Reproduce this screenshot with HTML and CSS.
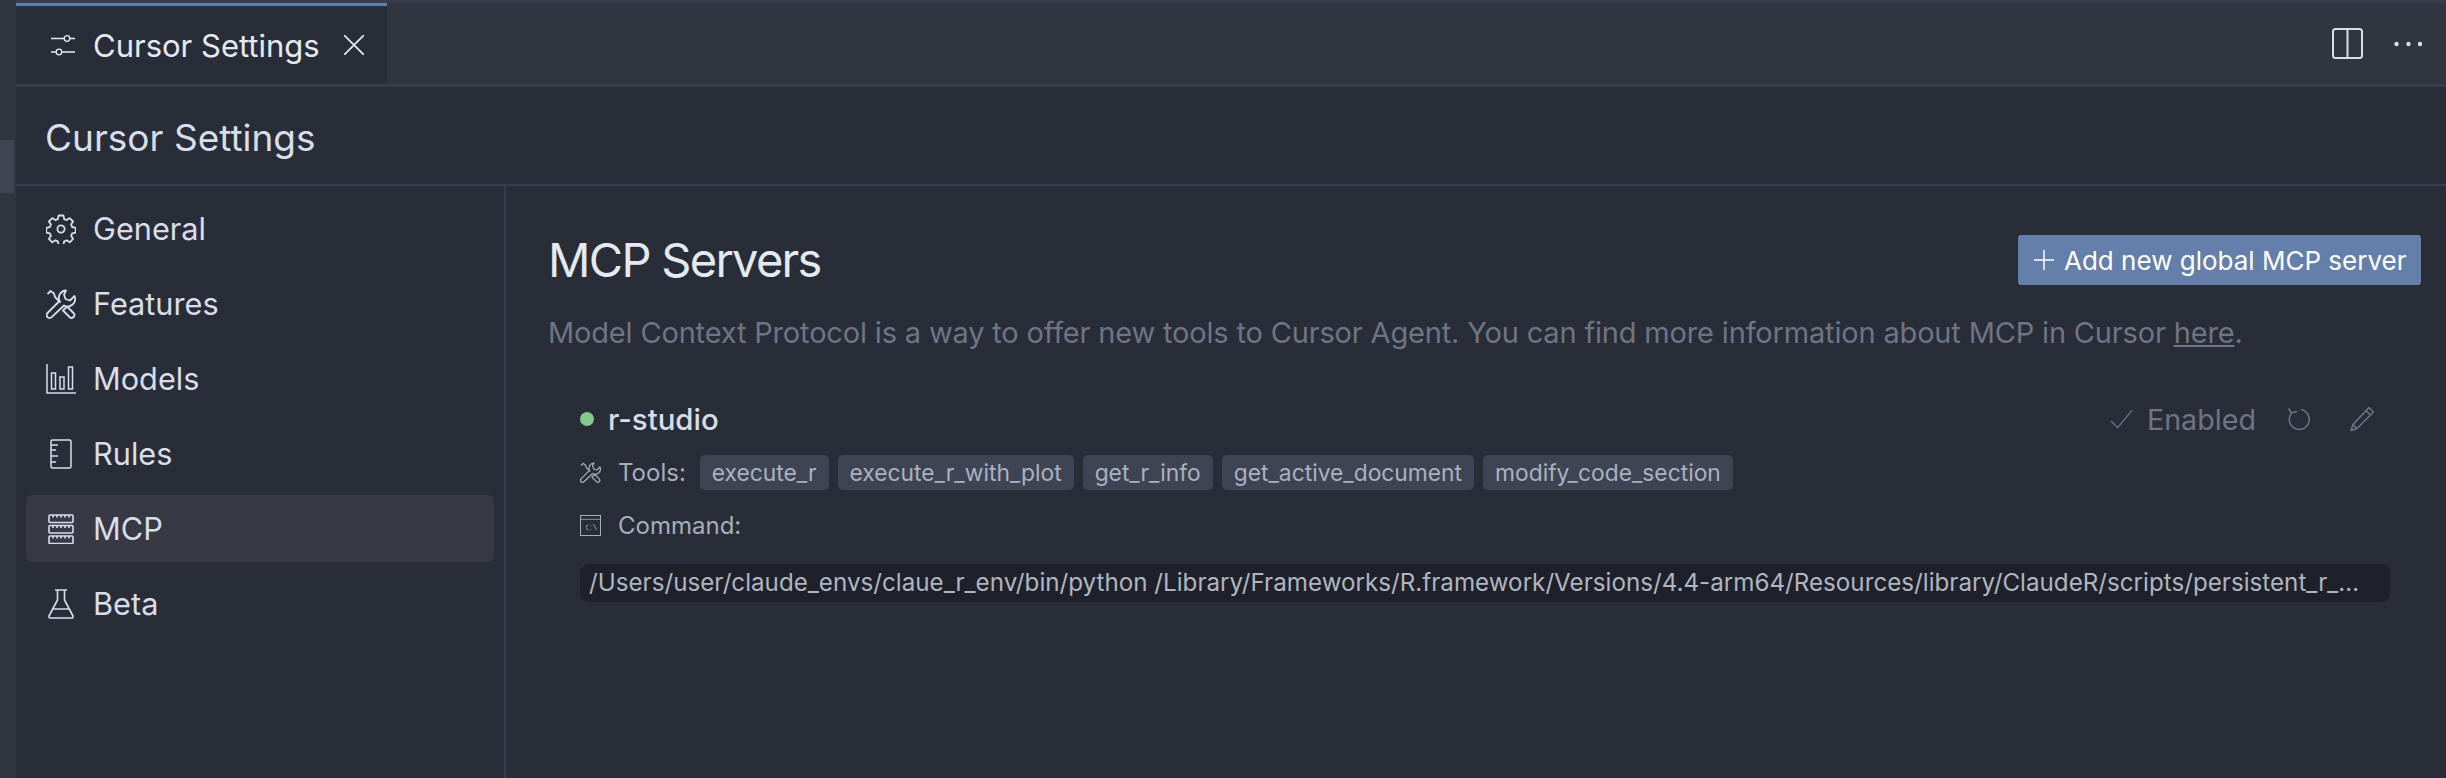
FILE: index.html
```html
<!DOCTYPE html>
<html lang="en">
<head>
<meta charset="utf-8">
<title>Cursor Settings</title>
<link rel="stylesheet" href="styles.css">
</head>
<body>
<div class="app">
  <div class="strip"><div class="strip-thumb"></div></div>
  <div class="main">
    <div class="tabbar">
      <div class="tab">
        <svg class="tab-icon" viewBox="0 0 24 22" fill="none" stroke="currentColor" stroke-width="1.300"><path d="M0 4.500h13M19 4.500h5M0 18h5M11 18h13"/><circle cx="16" cy="4.500" r="2.800"/><circle cx="8" cy="18" r="2.800"/></svg>
        <span class="tab-label">Cursor Settings</span>
        <svg class="tab-close" viewBox="0 0 20 20" fill="none" stroke="currentColor" stroke-width="1.700"><path d="M0 0l20 20M20 0L0 20"/></svg>
      </div>
      <div class="tab-actions">
        <svg class="split-icon" viewBox="0 0 31 31" fill="none" stroke="currentColor" stroke-width="2"><rect x="1" y="1" width="29" height="29" rx="2.500"/><path d="M15.500 1v29"/></svg>
        <svg class="more-icon" viewBox="0 0 28 6" fill="currentColor"><circle cx="2.500" cy="3" r="2.200"/><circle cx="14.500" cy="3" r="2.200"/><circle cx="26" cy="3" r="2.200"/></svg>
      </div>
    </div>
    <div class="page-head">Cursor Settings</div>
    <div class="body">
      <nav class="nav">
        <div class="nav-item">
          <svg class="nav-icon" viewBox="0 0 30 30" fill="none" stroke="currentColor" stroke-width="1.800" stroke-linejoin="round"><circle cx="15" cy="15" r="3.600"/><path d="M12.600 1.500h4.800l.8 3.600 2.400 1 3.100-2 3.400 3.400-2 3.100 1 2.400 3.600.8v4.800l-3.600.8-1 2.400 2 3.100-3.400 3.400-3.100-2-2.400 1-.8 3.600h-4.800l-.8-3.600-2.400-1-3.100 2-3.400-3.400 2-3.100-1-2.400-3.600-.8v-4.800l3.600-.8 1-2.400-2-3.100 3.400-3.400 3.100 2 2.400-1z"/></svg>
          <span>General</span>
        </div>
        <div class="nav-item">
          <svg class="nav-icon" viewBox="0 0 30 30" fill="none" stroke="currentColor" stroke-width="1.800" stroke-linejoin="round"><path d="M20 1.500a7.500 7.500 0 0 0-6.500 10.500L1.500 24a2.800 2.800 0 0 0 4.200 4.200L18 16.500A7.500 7.500 0 0 0 28.500 7l-4.500 4.500-4.500-1.500-1.500-4.500z"/><path d="M1.500 5l3-3 3.500 2.500 1 3.500 5.500 5.500M19 19.500l-2 2 6.500 6.500a2.500 2.500 0 0 0 4-4l-6-6z"/></svg>
          <span>Features</span>
        </div>
        <div class="nav-item">
          <svg class="nav-icon" viewBox="0 0 30 30" fill="none" stroke="currentColor" stroke-width="1.500"><path d="M1 0v29h29M5.500 9h4v16h-4zM14 13h4v12h-4zM22.500 3h4v22h-4z"/></svg>
          <span>Models</span>
        </div>
        <div class="nav-item">
          <svg class="nav-icon" viewBox="0 0 30 30" fill="none" stroke="currentColor" stroke-width="1.500" stroke-linejoin="round"><rect x="5" y="1" width="20" height="28" rx="1.500"/><path d="M5 6h7M5 11h5M5 17h7M5 23h5"/></svg>
          <span>Rules</span>
        </div>
        <div class="nav-item active">
          <svg class="nav-icon" viewBox="0 0 30 30" fill="none" stroke="currentColor" stroke-width="1.600"><rect x="3" y="1" width="24" height="7.500" rx="1"/><rect x="3" y="11.500" width="24" height="7.500" rx="1"/><rect x="3" y="22" width="24" height="7.500" rx="1"/><path d="M7 1v2.500M11 1v2.500M15 1v2.500M19 1v2.500M23 1v2.500M7 11.500V14M11 11.500V14M15 11.500V14M19 11.500V14M23 11.500V14M7 22v2.500M11 22v2.500M15 22v2.500M19 22v2.500M23 22v2.500"/></svg>
          <span>MCP</span>
        </div>
        <div class="nav-item">
          <svg class="nav-icon" viewBox="0 0 30 30" fill="none" stroke="currentColor" stroke-width="1.600" stroke-linejoin="round"><path d="M9 1h12M11.500 1v10L3 27a1.500 1.500 0 0 0 1.500 2h21a1.500 1.500 0 0 0 1.500-2L18.500 11V1M7.500 20h15"/></svg>
          <span>Beta</span>
        </div>
      </nav>
      <section class="content">
        <div class="content-head">
          <h1 class="title">MCP Servers</h1>
          <div class="add-btn">
            <svg class="add-icon" viewBox="0 0 20 20" fill="none" stroke="currentColor" stroke-width="1.500"><path d="M10 0v20M0 10h20"/></svg>
            <span>Add new global MCP server</span>
          </div>
        </div>
        <p class="desc">Model Context Protocol is a way to offer new tools to Cursor Agent. You can find more information about MCP in Cursor <u>here</u>.</p>
        <div class="server">
          <div class="server-top">
            <span class="dot"></span>
            <span class="server-name">r-studio</span>
            <div class="server-actions">
              <svg class="check-icon" viewBox="0 0 24 20" fill="none" stroke="currentColor" stroke-width="1.400"><path d="M1 12l7 7L23 1"/></svg>
              <span class="enabled">Enabled</span>
              <svg class="reload-icon" viewBox="0 0 24 24" fill="none" stroke="currentColor" stroke-width="1.500"><path d="M14 2.500A10 10 0 1 1 4.500 6M1.500 1.500L4.500 6 10 4.500"/></svg>
              <svg class="pen-icon" viewBox="0 0 26 26" fill="none" stroke="currentColor" stroke-width="1.500" stroke-linejoin="round"><path d="M20 1.500l4.500 4.500L8 22.500l-6 2 2-6zM17 4.500l4.500 4.500M4 18.500l3.500 3.500"/></svg>
            </div>
          </div>
          <div class="meta-row">
            <svg class="meta-icon" viewBox="0 0 30 30" fill="none" stroke="currentColor" stroke-width="1.700" stroke-linejoin="round"><path d="M20 1.500a7.500 7.500 0 0 0-6.500 10.500L1.500 24a2.800 2.800 0 0 0 4.200 4.200L18 16.500A7.500 7.500 0 0 0 28.500 7l-4.500 4.500-4.500-1.500-1.500-4.500z"/><path d="M1.500 5l3-3 3.500 2.500 1 3.500 5.500 5.500M19 19.500l-2 2 6.500 6.500a2.500 2.500 0 0 0 4-4l-6-6z"/></svg>
            <span class="meta-label">Tools:</span>
            <div class="chips">
              <span class="chip">execute_r</span>
              <span class="chip">execute_r_with_plot</span>
              <span class="chip">get_r_info</span>
              <span class="chip">get_active_document</span>
              <span class="chip">modify_code_section</span>
            </div>
          </div>
          <div class="meta-row command-row">
            <svg class="meta-icon" viewBox="0 0 22 22" fill="none" stroke="currentColor" stroke-width="1"><rect x=".5" y=".5" width="21" height="21"/><path d="M.5 4.500h21M9 10.500a2.500 2.500 0 1 0 0 5M11.500 11v.8M11.500 15v.8M14 9.500l3.500 6.500" stroke-width=".8"/></svg>
            <span class="meta-label">Command:</span>
          </div>
          <div class="code">/Users/user/claude_envs/claue_r_env/bin/python /Library/Frameworks/R.framework/Versions/4.4-arm64/Resources/library/ClaudeR/scripts/persistent_r_…</div>
        </div>
      </section>
    </div>
  </div>
</div>
</body>
</html>
```
FILE: styles.css
```css
* { box-sizing: border-box; }
html, body { margin: 0; height: 100%; }
body {
  background: #292d38;
  font-family: Inter, "Noto Sans", sans-serif;
  color: #d8dee9;
  overflow: hidden;
}
.app { display: flex; height: 778px; }
.strip { width: 16px; background: #313540; padding-top: 140px; }
.strip-thumb { width: 14px; height: 53px; background: #3e4451; }
.main { flex: 1; display: flex; flex-direction: column; min-width: 0; }

.tabbar {
  height: 87px;
  display: flex;
  justify-content: space-between;
  background: #313540;
  border-top: 3px solid #383c4a;
  border-bottom: 3px solid #383c4a;
}
.tab {
  width: 371px;
  height: 81px;
  display: flex;
  align-items: center;
  padding-left: 35px;
  background: #292d38;
  border-top: 3px solid #5e81ac;
  color: #e5e9f0;
}
.tab-icon { width: 24px; height: 22px; flex: none; }
.tab-label { font-size: 31px; margin-left: 18px; }
.tab-close { width: 20px; height: 20px; margin-left: 24px; flex: none; }
.tab-actions { display: flex; align-items: center; gap: 31px; padding-right: 24px; }
.split-icon { width: 31px; height: 31px; }
.more-icon { width: 28px; height: 6px; }

.page-head {
  height: 99px;
  padding-top: 4px;
  display: flex;
  align-items: center;
  padding-left: 29px;
  font-size: 37px;
  color: #d8dee9;
  border-bottom: 2px solid #383c4a;
}

.body { flex: 1; display: flex; min-height: 0; }
.nav {
  width: 490px;
  flex: none;
  padding: 9px 10px 0;
  display: flex;
  flex-direction: column;
  gap: 8px;
  border-right: 2px solid #383c4a;
}
.nav-item {
  height: 67px;
  flex: none;
  display: flex;
  align-items: center;
  gap: 17px;
  padding-left: 20px;
  border-radius: 6px;
  font-size: 30.700px;
}
.nav-item.active { background: #373944; }
.nav-icon { width: 30px; height: 30px; flex: none; }

.content { flex: 1; min-width: 0; padding: 0 25px 0 42px; }
.content-head { display: flex; justify-content: space-between; align-items: center; padding-top: 49px; }
.title { margin: 0; font-size: 47px; line-height: 50px; font-weight: 400; letter-spacing: -1.700px; color: #e5e9f0; }
.add-btn {
  width: 403px;
  height: 50px;
  display: flex;
  align-items: center;
  gap: 10px;
  padding-left: 16px;
  background: #647fa9;
  border-radius: 3px;
  color: #fff;
  font-size: 26px;
}
.add-icon { width: 20px; height: 20px; flex: none; }
.desc { margin: 24px 0 0; font-size: 29px; letter-spacing: -0.170px; line-height: 48px; color: #6f7583; white-space: nowrap; }

.server { padding: 46px 31px 0 32px; }
.server-top { height: 32px; display: flex; align-items: center; }
.dot { width: 14px; height: 14px; border-radius: 50%; background: #86c78d; flex: none; }
.server-name { margin-left: 14px; font-size: 29.400px; font-weight: 500; }
.server-actions { margin-left: auto; display: flex; align-items: center; color: #6f7583; padding-right: 15px; }
.check-icon { width: 23px; height: 20px; }
.enabled { font-size: 28.700px; margin: 0 31px 0 14px; }
.reload-icon { width: 24px; height: 24px; }
.pen-icon { width: 26px; height: 26px; margin-left: 38px; }

.meta-row { display: flex; align-items: center; color: #aeb3bf; margin-top: 20px; height: 35px; }
.command-row { margin-top: 18px; }
.meta-icon { width: 21px; height: 21px; flex: none; }
.meta-label { font-size: 24px; margin-left: 17px; color: #a7adba; }
.chips { display: flex; gap: 9px; margin-left: 14px; }
.chip {
  height: 35px;
  display: flex;
  align-items: center;
  padding: 0 12px;
  background: #3e4453;
  border-radius: 5px;
  font-size: 22.800px;
  color: #abb1bf;
}
.code {
  margin-top: 21px;
  height: 38px;
  padding: 0 9px;
  line-height: 38px;
  background: #1e2129;
  border-radius: 9px;
  font-size: 24.200px;
  color: #b0b5c1;
  white-space: nowrap;
}
```
